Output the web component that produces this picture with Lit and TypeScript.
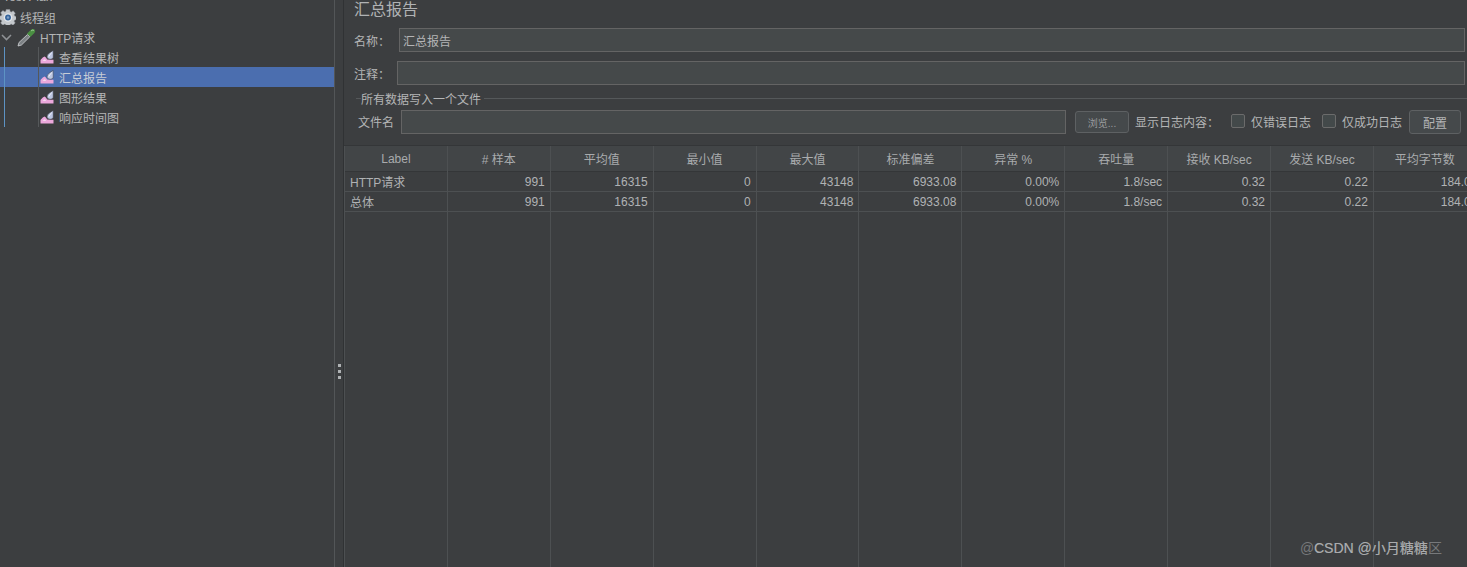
import { LitElement, html, css } from "lit";
import { customElement } from "lit/decorators.js";

const gear = html`<svg class="ic" width="16" height="16" viewBox="0 0 18 18">
  <path d="M7 0.5h4l.4 2.3 1.4.6 2-1.3 2.4 2.6-1.3 1.9.6 1.4 2 .5v3.4l-2 .5-.6 1.4 1.2 2-2.5 2.4-1.9-1.2-1.4.6-.4 2.3H7l-.4-2.3-1.4-.6-1.9 1.2-2.6-2.4 1.3-2-.6-1.4-2-.5V8l2-.4.6-1.4-1.3-2 2.6-2.5 1.9 1.3 1.4-.6z" fill="#c4c8cc" stroke="#8b9095" stroke-width=".6"/>
  <circle cx="9" cy="9.5" r="4.8" fill="#e4e7ea"/>
  <circle cx="9" cy="9.5" r="3.3" fill="#37659c"/>
  <circle cx="9" cy="9.5" r="1.4" fill="#7f9fc6"/>
</svg>`;

const pipette = html`<svg class="ic" width="19" height="19" viewBox="0 0 19 19">
  <path d="M1 18 L2 14.5 L10.5 6.5 L12.8 8.8 L4.5 17 Z" fill="#7d8285" stroke="#d0d3d5" stroke-width=".8"/>
  <path d="M10 5.5 L14 1.8 Q16 .3 17.6 1.6 Q19 3.2 17.4 5 L13.4 9 Z" fill="#4a8f42"/>
  <path d="M14.2 2.8 Q15.8 1.6 16.8 2.4" stroke="#a5d59b" fill="none"/>
</svg>`;

const listener = html`<svg class="ic" width="14" height="14" viewBox="0 0 14 14">
  <path d="M0.5 13.5 V10 Q2.6 7 4.4 6.4 Q6 7 7.2 9.4 L13.5 9.8 V13.5 Z" fill="#eba8dc"/>
  <path d="M2.6 11 Q4 9 5 9.2 L6.2 11 Z" fill="#f6dcf0"/>
  <path d="M13.2 0.4 V8 Q11 10 8.6 9 Q6.2 7.6 7.4 5 Q9.6 2.4 13.2 0.4 Z" fill="#bcc6e2" stroke="#3c3e40" stroke-width=".5"/>
  <path d="M11.8 2.8 Q9.6 4.4 8.8 6.6" stroke="#eef1fa" fill="none"/>
</svg>`;

const cols: { h: string; v: string[] }[] = [
  { h: "Label", v: ["HTTP请求", "总体"] },
  { h: "# 样本", v: ["991", "991"] },
  { h: "平均值", v: ["16315", "16315"] },
  { h: "最小值", v: ["0", "0"] },
  { h: "最大值", v: ["43148", "43148"] },
  { h: "标准偏差", v: ["6933.08", "6933.08"] },
  { h: "异常 %", v: ["0.00%", "0.00%"] },
  { h: "吞吐量", v: ["1.8/sec", "1.8/sec"] },
  { h: "接收 KB/sec", v: ["0.32", "0.32"] },
  { h: "发送 KB/sec", v: ["0.22", "0.22"] },
  { h: "平均字节数", v: ["184.0", "184.0"] },
];

@customElement("app-root")
export class AppRoot extends LitElement {
  static styles = css`
    :host {
      display: grid;
      grid-template-columns: 334px 10px 1fr;
      width: 1467px;
      height: 567px;
      overflow: hidden;
      position: relative;
      background: #3c3e40;
      color: #b4b5b6;
      font-family: "Liberation Sans", "Noto Sans CJK SC", sans-serif;
      font-size: 12px;
    }
    .tree {
      position: relative;
      margin-top: -13px;
      font-size: 12px;
    }
    .row {
      display: flex;
      align-items: center;
      height: 20px;
      white-space: nowrap;
    }
    .row.sel { background: #4b6eaf; color: #c8cdd6; }
    .r0 { padding-left: 3px; }
    .r1 { gap: 4px; }
    .r2 { gap: 3px; }
    .r2 span { margin-left: 1px; }
    .r3 { padding-left: 40px; gap: 5px; }
    .ic { flex: none; display: block; }
    .chev { flex: none; margin: 0 2px 0 1px; }
    .guide { position: absolute; width: 1px; top: 60px; height: 80px; }
    .g1 { left: 4px; background: #5d93c4; }
    .g2 { left: 38px; background: #55585a; }
    .split {
      border-left: 1px solid #535658;
      border-right: 1px solid #303234;
      display: flex;
      flex-direction: column;
      align-items: center;
      gap: 3px;
      padding-top: 364px;
      box-sizing: border-box;
    }
    .split i { width: 3px; height: 3px; background: #b0b3b5; display: block; }
    .main {
      display: flex;
      flex-direction: column;
      min-width: 0;
      overflow: hidden;
    }
    .title {
      font-size: 16px;
      line-height: 20px;
      margin: 0 0 0 10px;
      height: 20px;
      color: #b0b2b4;
    }
    .frow { display: flex; align-items: center; }
    .name { margin: 8px 2px 0 10px; }
    .name label { width: 45px; }
    .note { margin: 9px 2px 0 10px; }
    .note label { width: 43px; }
    .input {
      flex: 1;
      height: 24px;
      box-sizing: border-box;
      background: #45494a;
      border: 1px solid #646464;
      padding: 0 3px;
      line-height: 26px;
      min-width: 0;
    }
    .group {
      margin: 3px 0 0 0;
      height: 49px;
      display: flex;
      flex-direction: column;
    }
    .legend {
      display: flex;
      align-items: center;
      height: 20px;
      padding-left: 12px;
    }
    .legend::before,
    .legend::after {
      content: "";
      height: 1px;
      background: #55585a;
    }
    .legend::before { width: 5px; }
    .legend::after { flex: 1; }
    .legend span { padding: 0 3px 0 0; margin-left: 0; }
    .file { padding: 2px 6px 0 14px; }
    .file label { width: 43px; white-space: nowrap; margin-top: -2px; }
    .file .input { flex: none; width: 665px; }
    .btn {
      box-sizing: border-box;
      display: flex;
      align-items: center;
      justify-content: center;
      border: 1px solid #5e6163;
      border-radius: 3px;
      background: #45494b;
      flex: none;
    }
    .browse { width: 54px; height: 22px; margin-left: 9px; font-size: 10px; color: #9a9c9e; }
    .show { margin-left: 6px; width: 96px; white-space: nowrap; margin-top: -2px; }
    .cb {
      flex: none;
      width: 14px;
      height: 14px;
      box-sizing: border-box;
      border: 1px solid #6b6b6b;
      border-radius: 2px;
      background: #43494a;
      margin: -2px 6px 0 0;
    }
    .ck { white-space: nowrap; margin-top: -2px; }
    .c1 { width: 71px; }
    .c2 { width: 67px; }
    .conf { width: 52px; height: 24px; }
    .table {
      flex: 1;
      display: flex;
      margin-top: 8px;
      border-top: 1px solid #343638;
      min-height: 0;
    }
    .col {
      flex: none;
      width: 102.9px;
      box-sizing: border-box;
      border-right: 1px solid #4d5052;
    }
    .col:first-child { border-left: 1px solid #4d5052; width: 103.9px; }
    .hd {
      height: 26px;
      box-sizing: border-box;
      background: #424547;
      border-bottom: 1px solid #343638;
      display: flex;
      align-items: center;
      justify-content: center;
      white-space: nowrap;
      color: #a9abad;
    }
    .td {
      height: 20px;
      box-sizing: border-box;
      border-bottom: 1px solid #4d5052;
      display: flex;
      align-items: center;
      justify-content: flex-end;
      padding-right: 5px;
      white-space: nowrap;
      color: #b0b2b4;
    }
    .col:first-child .td { justify-content: flex-start; padding: 0 0 0 5px; }
    .wm {
      position: absolute;
      top: 538px;
      left: 1300px;
      font-size: 14px;
      line-height: 20px;
      color: #77797b;
      white-space: nowrap;
    }
    .wm.front { left: 1314px; color: #a9abad; }
  `;

  render() {
    const leaf = (t: string, sel = false) => html`
      <div class="row r3 ${sel ? "sel" : ""}">${listener}<span>${t}</span></div>`;
    return html`
      <div class="tree">
        <div class="row r0">Test Plan</div>
        <div class="row r1">${gear}<span>线程组</span></div>
        <div class="row r2">
          <svg class="chev" width="11" height="7" viewBox="0 0 11 7">
            <path d="M1 1 L5.5 5.6 L10 1" fill="none" stroke="#8f9295" stroke-width="1.5"/>
          </svg>${pipette}<span>HTTP请求</span>
        </div>
        ${leaf("查看结果树")} ${leaf("汇总报告", true)} ${leaf("图形结果")} ${leaf("响应时间图")}
        <div class="guide g1"></div>
        <div class="guide g2"></div>
      </div>
      <div class="split"><i></i><i></i><i></i></div>
      <div class="main">
        <div class="title">汇总报告</div>
        <div class="frow name"><label>名称：</label><div class="input">汇总报告</div></div>
        <div class="frow note"><label>注释：</label><div class="input"></div></div>
        <div class="group">
          <div class="legend"><span>所有数据写入一个文件</span></div>
          <div class="frow file">
            <label>文件名</label>
            <div class="input"></div>
            <div class="btn browse">浏览...</div>
            <span class="show">显示日志内容：</span>
            <span class="cb"></span><span class="ck c1">仅错误日志</span>
            <span class="cb"></span><span class="ck c2">仅成功日志</span>
            <div class="btn conf">配置</div>
          </div>
        </div>
        <div class="table">
          ${cols.map(
            (c) => html`<div class="col">
              <div class="hd">${c.h}</div>
              ${c.v.map((v) => html`<div class="td">${v}</div>`)}
            </div>`
          )}
        </div>
      </div>
      <div class="wm">@CSDN @小月糖糖区</div>
      <div class="wm front">CSDN @小月糖糖</div>
    `;
  }
}
